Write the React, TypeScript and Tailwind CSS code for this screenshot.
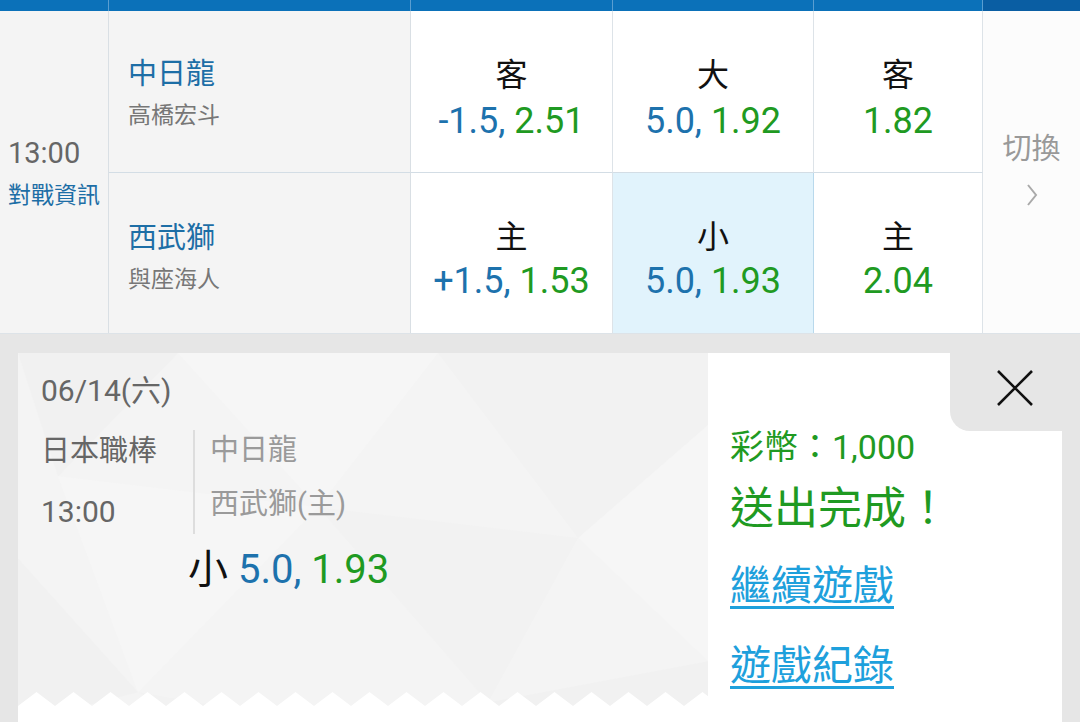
import type { ReactNode } from "react";

type Odd = { label: string; line?: string; price: string; active?: boolean };

const rows: { team: string; pitcher: string; odds: Odd[] }[] = [
  {
    team: "中日龍",
    pitcher: "高橋宏斗",
    odds: [
      { label: "客", line: "-1.5,", price: "2.51" },
      { label: "大", line: "5.0,", price: "1.92" },
      { label: "客", price: "1.82" },
    ],
  },
  {
    team: "西武獅",
    pitcher: "與座海人",
    odds: [
      { label: "主", line: "+1.5,", price: "1.53" },
      { label: "小", line: "5.0,", price: "1.93", active: true },
      { label: "主", price: "2.04" },
    ],
  },
];

const font = "font-[Roboto,'Noto_Sans_CJK_TC',sans-serif]";

function OddCell({ odd, top }: { odd: Odd; top: boolean }) {
  return (
    <div
      className={`flex flex-col items-center justify-center border-r pt-[14px] ${
        top ? "border-b border-b-[#d3dde5]" : ""
      } ${odd.active ? "bg-[#e1f3fc] border-[#b9d9ec]" : "bg-white border-[#dde3e8]"}`}
    >
      <span className="text-[32px] leading-[36px] text-[#111]">{odd.label}</span>
      <span className={`${top ? "mt-[8px]" : "mt-[6px]"} text-[36px] leading-[40px] whitespace-pre`}>
        {odd.line && <span className="text-[#1d72ad]">{odd.line} </span>}
        <span className="text-[#1f9a22]">{odd.price}</span>
      </span>
    </div>
  );
}

function Facets() {
  return (
    <svg
      className="pointer-events-none absolute inset-0 h-full w-full"
      viewBox="0 0 690 360"
      preserveAspectRatio="none"
    >
      <polygon points="0,0 160,0 40,120" fill="#f1f1f1" />
      <polygon points="160,0 420,0 300,150" fill="#f6f6f6" />
      <polygon points="420,0 690,0 690,70 560,180" fill="#f2f2f2" />
      <polygon points="40,120 300,150 120,330" fill="#f6f6f6" />
      <polygon points="300,150 560,180 470,340" fill="#f2f2f2" />
      <polygon points="560,180 690,70 690,300" fill="#f6f6f6" />
      <polygon points="0,200 120,330 0,360" fill="#f1f1f1" />
      <polygon points="470,340 690,300 690,360 420,360" fill="#f1f1f1" />
      <polygon points="120,330 300,360 180,360" fill="#f2f2f2" />
    </svg>
  );
}

function Zigzag() {
  const teeth = Array.from({ length: 19 }, (_, i) => i * 37);
  return (
    <svg className="block h-[16px] w-full" viewBox="0 0 690 16" preserveAspectRatio="none">
      <path
        d={
          "M0,16 " +
          teeth.map((x) => `L${x + 18.5},2 L${x + 37},16`).join(" ") +
          " Z"
        }
        fill="#ffffff"
      />
    </svg>
  );
}

function Section({ children }: { children: ReactNode }) {
  return <div className="flex h-[389px] bg-[#e6e6e6] px-[18px] pt-[19px]">{children}</div>;
}

export default function App() {
  return (
    <div className={`h-[722px] w-[1080px] overflow-hidden bg-[#e6e6e6] ${font}`}>
      {/* header strip */}
      <div className="grid h-[11px] grid-cols-[109px_302px_202px_201px_169px_1fr] bg-[#0b71b9]">
        <div className="border-r border-[#5a9ed1]" />
        <div className="border-r border-[#5a9ed1]" />
        <div className="border-r border-[#5a9ed1]" />
        <div className="border-r border-[#5a9ed1]" />
        <div className="border-r border-[#5a9ed1]" />
        <div className="bg-[#0a5ea3]" />
      </div>

      {/* match table */}
      <div className="grid grid-cols-[109px_302px_202px_201px_169px_1fr] grid-rows-[162px_160px] border-b border-[#dde3e8]">
        <div className="row-span-2 flex flex-col justify-center border-r border-[#d9dfe4] bg-[#f4f4f4] pl-[8px] pt-[2px]">
          <span className="text-[29px] leading-[34px] text-[#666]">13:00</span>
          <span className="mt-[12px] text-[23px] leading-[28px] text-[#1d6ea6]">對戰資訊</span>
        </div>

        {rows.map((row, r) => [
          <div
            key={`t${r}`}
            className={`col-start-2 flex flex-col justify-center border-r border-[#d9dfe4] bg-[#f4f4f4] pl-[19px] ${
              r === 0 ? "row-start-1 border-b border-b-[#d3dde5] pt-[3px]" : "row-start-2 pt-[8px]"
            }`}
          >
            <span className="text-[29px] leading-[36px] text-[#1d6ea6]">{row.team}</span>
            <span className="mt-[10px] text-[23px] leading-[28px] text-[#777]">{row.pitcher}</span>
          </div>,
          ...row.odds.map((odd, c) => (
            <OddCell key={`o${r}${c}`} odd={odd} top={r === 0} />
          )),
          r === 0 ? (
            <div
              key="switch"
              className="col-start-6 row-span-2 row-start-1 flex flex-col items-center justify-center bg-[#fcfcfc] pb-[4px]"
            >
              <span className="text-[29px] leading-[34px] text-[#999]">切換</span>
              <svg className="mt-[16px] h-[26px] w-[14px]" viewBox="0 0 14 26" fill="none">
                <path d="M3 3 L11 13 L3 23" stroke="#aaa" strokeWidth="2" />
              </svg>
            </div>
          ) : null,
        ])}
      </div>

      {/* bet slip */}
      <Section>
        <div className="flex flex-1">
          <div className="relative flex w-[690px] flex-col bg-[#f4f4f4]">
            <Facets />
            <div className="relative flex-1 pl-[23px] pt-[19px] text-[#666]">
              <div className="text-[30px] leading-[38px]">06/14(六)</div>
              <div className="mt-[23px] flex">
                <div className="flex w-[152px] flex-col gap-[25px]">
                  <span className="text-[29px] leading-[36px]">日本職棒</span>
                  <span className="text-[30px] leading-[36px]">13:00</span>
                </div>
                <div className="-mt-[3px] flex flex-col gap-[18px] border-l-2 border-[#ddd] pl-[15px] pt-[2px] pb-[12px] text-[#9a9a9a]">
                  <span className="text-[29px] leading-[36px]">中日龍</span>
                  <span className="text-[29px] leading-[36px]">西武獅(主)</span>
                </div>
              </div>
              <div className="ml-[147px] mt-[13px] text-[40px] leading-[46px]">
                <span className="text-[#111]">小 </span>
                <span className="text-[#1d72ad]">5.0, </span>
                <span className="text-[#1f9a22]">1.93</span>
              </div>
            </div>
            <div className="relative">
              <Zigzag />
              <div className="h-[17px] bg-white" />
            </div>
          </div>

          <div className="relative flex flex-1 flex-col bg-white pl-[22px] pt-[72px]">
            <button className="absolute right-0 top-0 flex h-[78px] w-[112px] items-start justify-end rounded-bl-[20px] bg-[#e6e6e6] pr-[29px] pt-[17px]">
              <svg className="h-[36px] w-[36px]" viewBox="0 0 36 36" fill="none">
                <path d="M1 1 L35 35 M35 1 L1 35" stroke="#111" strokeWidth="2.6" />
              </svg>
            </button>
            <span className="text-[34px] leading-[44px] text-[#1f9a22]">彩幣：1,000</span>
            <span className="mt-[14px] text-[44px] leading-[52px] text-[#1f9a22]">送出完成！</span>
            <a className="mt-[27px] w-fit text-[41px] leading-[48px] text-[#1ea0dc] underline decoration-[3px] underline-offset-[6px]">
              繼續遊戲
            </a>
            <a className="mt-[32px] w-fit text-[41px] leading-[48px] text-[#1ea0dc] underline decoration-[3px] underline-offset-[6px]">
              遊戲紀錄
            </a>
          </div>
        </div>
      </Section>
    </div>
  );
}
